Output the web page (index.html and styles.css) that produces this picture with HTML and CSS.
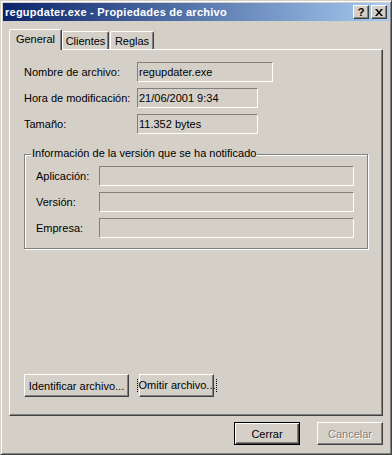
FILE: index.html
```html
<!DOCTYPE html>
<html lang="es">
<head>
<meta charset="utf-8">
<title>regupdater.exe - Propiedades de archivo</title>
<link rel="stylesheet" href="styles.css">
</head>
<body>
<div class="window">
  <div class="titlebar">
    <span class="title">regupdater.exe - Propiedades de archivo</span>
    <div class="caps">
      <button class="cap help">?</button>
      <button class="cap close">
        <svg width="8" height="7" viewBox="0 0 8 7"><path d="M0 0h2l2 2.5L6 0h2L5 3.5 8 7H6L4 4.5 2 7H0l3-3.5z" fill="#000"/></svg>
      </button>
    </div>
  </div>
  <div class="content">
    <div class="tabs">
      <div class="tab active t-general">General</div>
      <div class="tab t-clientes">Clientes</div>
      <div class="tab t-reglas">Reglas</div>
    </div>
    <div class="panel">
      <div class="fields">
        <span class="label">Nombre de archivo:</span>
        <div class="box w1">regupdater.exe</div>
        <span class="label">Hora de modificación:</span>
        <div class="box w2">21/06/2001 9:34</div>
        <span class="label">Tamaño:</span>
        <div class="box w2">11.352 bytes</div>
      </div>
      <div class="group">
        <span class="legend">Información de la versión que se ha notificado</span>
        <span class="label">Aplicación:</span>
        <div class="box"></div>
        <span class="label">Versión:</span>
        <div class="box"></div>
        <span class="label">Empresa:</span>
        <div class="box"></div>
      </div>
      <div class="actions">
        <button class="btn b-ident">Identificar archivo...</button>
        <button class="btn b-omit"><span class="focus">Omitir archivo...</span></button>
      </div>
    </div>
    <div class="footer">
      <button class="btn default">Cerrar</button>
      <button class="btn disabled">Cancelar</button>
    </div>
  </div>
</div>
</body>
</html>
```
FILE: styles.css
```css
* { box-sizing: border-box; }
html, body { margin: 0; padding: 0; }
body {
  background: #d4d0c8;
  font-family: "Liberation Sans", Arial, sans-serif;
  font-size: 11px;
  color: #000;
}
.window {
  width: 392px;
  height: 455px;
  background: #d4d0c8;
  border: 1px solid;
  border-color: #d4d0c8 #404040 #404040 #d4d0c8;
  box-shadow: inset 1px 1px 0 #fff, inset -1px -1px 0 #808080;
  padding: 2px;
  display: flex;
  flex-direction: column;
}
.titlebar {
  height: 18px;
  flex: none;
  background: linear-gradient(to right, #0a246a, #a6caf0);
  display: flex;
  align-items: center;
  padding: 0 2px;
  color: #fff;
}
.title {
  flex: 1;
  font-weight: bold;
  font-size: 11px;
  letter-spacing: 0.25px;
  white-space: nowrap;
}
.caps { display: flex; gap: 2px; }
.cap {
  width: 16px;
  height: 14px;
  padding: 0;
  margin: 0;
  background: #d4d0c8;
  border: 1px solid;
  border-color: #fff #404040 #404040 #fff;
  box-shadow: inset -1px -1px 0 #808080;
  display: flex;
  align-items: center;
  justify-content: center;
  font-family: "Liberation Sans", Arial, sans-serif;
  font-weight: bold;
  font-size: 11px;
  line-height: 1;
  color: #000;
}
.cap svg { display: block; }
.content {
  flex: 1;
  padding: 8px 6px 0;
  display: flex;
  flex-direction: column;
}
.tabs {
  display: flex;
  align-items: flex-end;
  height: 20px;
  flex: none;
}
.tab {
  height: 18px;
  border: 1px solid;
  border-bottom: none;
  border-color: #fff #404040 transparent #fff;
  box-shadow: inset -1px 0 0 #808080;
  border-radius: 2px 2px 0 0;
  display: flex;
  align-items: center;
  justify-content: center;
  white-space: nowrap;
  padding-top: 1px;
}
.tab.active {
  height: 21px;
  margin-bottom: -1px;
  position: relative;
  z-index: 1;
  background: #d4d0c8;
  padding-top: 0;
  padding-bottom: 2px;
}
.t-general { width: 53px; }
.t-clientes { width: 47px; }
.t-reglas { width: 44px; margin-left: 1px; }
.panel {
  flex: none;
  height: 367px;
  border: 1px solid;
  border-color: #fff #404040 #404040 #fff;
  box-shadow: inset -1px -1px 0 #808080;
  padding: 12px 12px 18px 14px;
  display: flex;
  flex-direction: column;
}
.fields {
  display: grid;
  grid-template-columns: 113px auto;
  grid-auto-rows: 20px;
  row-gap: 6px;
  align-items: center;
}
.label { white-space: nowrap; }
.box {
  height: 20px;
  border: 1px solid;
  border-color: #808080 #fff #fff #808080;
  padding: 0 1px;
  display: flex;
  align-items: center;
  white-space: nowrap;
}
.w1 { width: 136px; }
.w2 { width: 121px; }
.group {
  margin-top: 20px;
  width: 344px;
  height: 95px;
  border: 1px solid #808080;
  box-shadow: inset 1px 1px 0 #fff, 1px 1px 0 #fff;
  position: relative;
  padding: 11px 0 0 11px;
  display: grid;
  grid-template-columns: 63px 255px;
  grid-auto-rows: 20px;
  row-gap: 6px;
  align-items: center;
  align-content: start;
}
.legend {
  position: absolute;
  top: -8px;
  left: 6px;
  background: #d4d0c8;
  padding: 0 1px;
  line-height: 13px;
  white-space: nowrap;
}
.actions {
  margin-top: auto;
  display: flex;
  gap: 10px;
}
.btn {
  height: 23px;
  margin: 0;
  padding: 0;
  background: #d4d0c8;
  border: 1px solid;
  border-color: #fff #404040 #404040 #fff;
  box-shadow: inset -1px -1px 0 #808080;
  font-family: inherit;
  font-size: 11px;
  color: #000;
  display: flex;
  align-items: center;
  justify-content: center;
  white-space: nowrap;
}
.b-ident { width: 105px; }
.b-omit { width: 75px; }
.focus {
  border-left: 1px dotted #000;
  border-right: 1px dotted #000;
  padding: 0 0 0 1px;
  line-height: 13px;
}
.footer {
  display: flex;
  justify-content: flex-end;
  gap: 17px;
  margin-top: 6px;
}
.footer .btn { width: 66px; }
.btn.default {
  border-color: #000;
  box-shadow: inset 1px 1px 0 #fff, inset -1px -1px 0 #404040, inset -2px -2px 0 #808080;
}
.btn.disabled {
  color: #808080;
  text-shadow: 1px 1px 0 #fff;
}
```
